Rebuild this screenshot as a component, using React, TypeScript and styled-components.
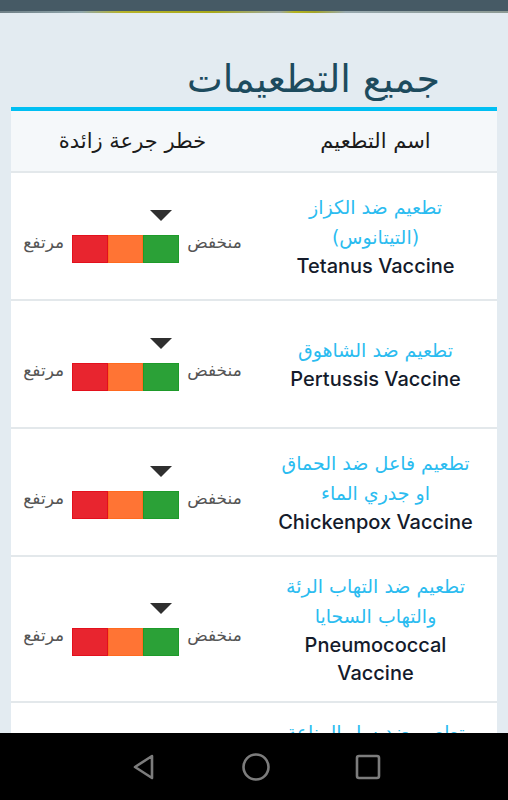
import styled, { createGlobalStyle } from 'styled-components';

type Vaccine = {
  ar: string[];
  en: string[];
  level: number; // 0 low, 1 mid, 2 high
};

const vaccines: Vaccine[] = [
  { ar: ['تطعيم ضد الكزاز', '(التيتانوس)'], en: ['Tetanus Vaccine'], level: 0 },
  { ar: ['تطعيم ضد الشاهوق'], en: ['Pertussis Vaccine'], level: 0 },
  {
    ar: ['تطعيم فاعل ضد الحماق', 'او جدري الماء'],
    en: ['Chickenpox Vaccine'],
    level: 0,
  },
  {
    ar: ['تطعيم ضد التهاب الرئة', 'والتهاب السحايا'],
    en: ['Pneumococcal', 'Vaccine'],
    level: 0,
  },
  {
    ar: ['تطعيم ضد سل المناعة', 'والحمى الشوكية'],
    en: ['Meningococcal', 'Vaccine'],
    level: 0,
  },
];

// left to right: high -> low
const segments = [
  { fill: '#e8252f', edge: '#e3101c' },
  { fill: '#ff7434', edge: '#ff6a1f' },
  { fill: '#2ba137', edge: '#1e9a2a' },
];

const App = () => {
  return (
    <Screen>
      <GlobalStyle />
      <StatusBar />
      <StatusStrip />
      <Content>
        <Title>جميع التطعيمات</Title>
        <Card>
          <HeaderRow>
            <HeaderCell>اسم التطعيم</HeaderCell>
            <HeaderCell>خطر جرعة زائدة</HeaderCell>
          </HeaderRow>
          {vaccines.map((v) => (
            <Row key={v.en.join(' ')}>
              <NameCell>
                {v.ar.map((line) => (
                  <ArLine key={line}>{line}</ArLine>
                ))}
                {v.en.map((line) => (
                  <EnLine key={line}>{line}</EnLine>
                ))}
              </NameCell>
              <RiskCell>
                <RiskLabel>منخفض</RiskLabel>
                <Gauge>
                  <Pointer
                    style={{ right: `${((v.level + 0.5) / 3) * 100}%` }}
                  />
                  <Bar>
                    {segments.map((s) => (
                      <Segment key={s.fill} $fill={s.fill} $edge={s.edge} />
                    ))}
                  </Bar>
                </Gauge>
                <RiskLabel>مرتفع</RiskLabel>
              </RiskCell>
            </Row>
          ))}
        </Card>
      </Content>
      <NavBar>
        <svg width="26" height="28" viewBox="0 0 26 28">
          <path
            d="M21 3 L4 14 L21 25 Z"
            fill="none"
            stroke="#7c7c7c"
            strokeWidth="2.6"
            strokeLinejoin="round"
          />
        </svg>
        <svg width="30" height="30" viewBox="0 0 30 30">
          <circle cx="15" cy="15" r="12.5" fill="none" stroke="#7c7c7c" strokeWidth="2.6" />
        </svg>
        <svg width="26" height="26" viewBox="0 0 26 26">
          <rect
            x="2"
            y="2"
            width="22"
            height="22"
            rx="2"
            fill="none"
            stroke="#7c7c7c"
            strokeWidth="2.6"
          />
        </svg>
      </NavBar>
    </Screen>
  );
};

const GlobalStyle = createGlobalStyle`
  html, body {
    margin: 0;
    padding: 0;
  }
  body {
    font-family: Roboto, "DejaVu Sans", sans-serif;
    background: #e3ebf1;
  }
`;

const Screen = styled.div`
  height: 100vh;
  display: flex;
  flex-direction: column;
  overflow: hidden;
  background: #e3ebf1;
`;

const StatusBar = styled.div`
  height: 11px;
  flex-shrink: 0;
  background: #465a65;
`;

const StatusStrip = styled.div`
  height: 2px;
  flex-shrink: 0;
  background: linear-gradient(
    90deg,
    #6f7f86 0%,
    #8fa5ab 16%,
    #b6b32a 24%,
    #a8a91a 42%,
    #9aa6a4 55%,
    #b3b31e 58%,
    #a3a52a 62%,
    #97a8ae 68%,
    #8d9a94 100%
  );
`;

const Content = styled.div`
  flex: 1;
  min-height: 0;
  overflow: hidden;
  padding: 0 11px;
`;

const Title = styled.h1`
  margin: 0;
  height: 94px;
  box-sizing: border-box;
  padding: 44px 57px 0 0;
  direction: rtl;
  text-align: right;
  font-family: "DejaVu Sans", sans-serif;
  font-weight: normal;
  font-size: 38px;
  line-height: 44px;
  color: #1d4b5e;
`;

const Card = styled.div`
  border-top: 4px solid #00bff3;
  background: #e3e8eb;
  display: flex;
  flex-direction: column;
  gap: 2px;
`;

const HeaderRow = styled.div`
  display: grid;
  grid-template-columns: 1fr 1fr;
  direction: rtl;
  height: 60px;
  background: #f5f8fa;
`;

const HeaderCell = styled.div`
  display: flex;
  align-items: center;
  justify-content: center;
  font-family: "DejaVu Sans", sans-serif;
  font-size: 21px;
  color: #1b1b1b;
`;

const Row = styled.div`
  display: grid;
  grid-template-columns: 1fr 1fr;
  direction: rtl;
  min-height: 126px;
  box-sizing: border-box;
  padding: 14px 0;
  background: #ffffff;
`;

const NameCell = styled.div`
  display: flex;
  flex-direction: column;
  align-items: center;
  justify-content: center;
  text-align: center;
`;

const ArLine = styled.div`
  font-family: "DejaVu Sans", sans-serif;
  font-size: 19px;
  line-height: 30px;
  color: #2bbcf0;
  white-space: nowrap;
`;

const EnLine = styled.div`
  direction: ltr;
  font-family: Inter, Roboto, sans-serif;
  font-weight: 500;
  font-size: 20px;
  line-height: 28px;
  color: #141b2b;
  white-space: nowrap;
`;

const RiskCell = styled.div`
  display: flex;
  align-items: center;
  justify-content: center;
  gap: 8px;
`;

const RiskLabel = styled.span`
  font-family: "DejaVu Sans", sans-serif;
  font-size: 17px;
  color: #555555;
  margin-top: 12px;
`;

const Gauge = styled.div`
  position: relative;
  padding-top: 25px;
`;

const Pointer = styled.div`
  position: absolute;
  top: 0;
  width: 0;
  height: 0;
  transform: translateX(50%);
  border-left: 11px solid transparent;
  border-right: 11px solid transparent;
  border-top: 11px solid #2f2f2f;
`;

const Bar = styled.div`
  display: flex;
  direction: ltr;
  height: 28px;
  width: 107px;
`;

const Segment = styled.div<{ $fill: string; $edge: string }>`
  flex: 1;
  box-sizing: border-box;
  background: ${({ $fill }) => $fill};
  border: 1px solid ${({ $edge }) => $edge};
`;

const NavBar = styled.div`
  height: 67px;
  flex-shrink: 0;
  background: #000000;
  display: flex;
  align-items: center;
  justify-content: center;
  gap: 84px;
  padding-left: 4px;
`;

export default App;
